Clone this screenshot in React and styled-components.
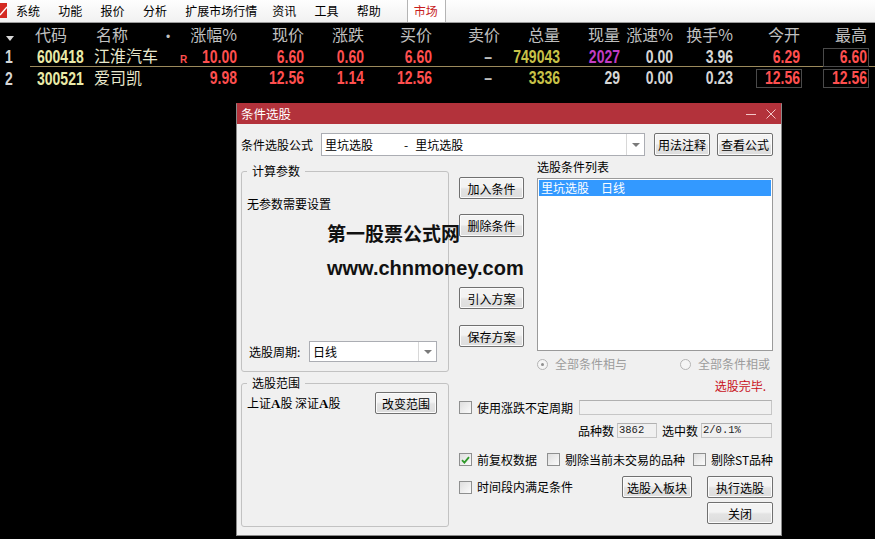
import React from 'react'
import styled, { createGlobalStyle, css } from 'styled-components'

const GlobalStyle = createGlobalStyle`
  html, body {
    margin: 0;
    padding: 0;
    background: #000;
  }
  body {
    font-family: "Noto Sans CJK SC", "Noto Sans", sans-serif;
  }
  * {
    box-sizing: border-box;
  }
`

const RED = '#ff4f4f'
const OLIVE = '#c8c248'
const PURPLE = '#c23cc4'
const LIGHT = '#d6d6d6'
const DASHC = '#bdbdbd'
const COLS = '30px 62px 73px 25px 51px 67px 60px 68px 68px 60px 60px 53px 60px 67px 67px'

const Screen = styled.div`
  position: relative;
  width: 875px;
  height: 539px;
  overflow: hidden;
  background: #000;
`

/* ---------- menu bar ---------- */

const MenuBar = styled.div`
  display: flex;
  align-items: stretch;
  height: 23px;
  background: linear-gradient(#fefefe, #f1f1f1);
  border-bottom: 1px solid #9c9c9c;
  font-size: 12px;
  line-height: 22px;
  color: #000;
`

const Logo = styled.svg`
  width: 7px;
  height: 15px;
  margin: 3px 9px 0 0;
`

const MenuItem = styled.div`
  min-width: 42.3px;
  padding-right: 15px;
  white-space: nowrap;
`

const MarketTab = styled.div`
  margin-left: 7.6px;
  padding: 0 7px 0 6px;
  border-left: 1px solid #b4b4b4;
  border-right: 1px solid #b4b4b4;
  background: #fff;
  color: #c81e1e;
`

/* ---------- quote table ---------- */

const HeadRow = styled.div`
  display: grid;
  grid-template-columns: ${COLS};
  height: 22px;
  font-size: 16px;
  line-height: 22px;
  color: #c0c0c0;
`

const HeadCell = styled.div`
  white-space: nowrap;
  text-align: ${p => (p.$right ? 'right' : 'left')};
  padding-left: ${p => p.$pl || 0}px;
  padding-right: ${p => (p.$right ? 4 : 0)}px;
`

const Bullet = styled.span`
  font-family: "Liberation Sans", Arial, sans-serif;
  font-size: 12px;
`

const SortArrow = styled.span`
  display: inline-block;
  margin-top: 8px;
  border-left: 4.5px solid transparent;
  border-right: 4.5px solid transparent;
  border-top: 5px solid #d8d8d8;
`

const DataRow = styled.div`
  display: grid;
  grid-template-columns: ${COLS};
  height: 22px;
  line-height: 21px;
  ${p =>
    p.$current &&
    css`
      background: linear-gradient(#9c8a5c, #9c8a5c) no-repeat 30px 21px / calc(100% - 30px) 1px;
    `}
`

/* digits of the quote board: a tall, narrow bold face */
const Digits = styled.span`
  display: inline-block;
  font-family: "Liberation Sans", Arial, sans-serif;
  font-weight: bold;
  font-size: 14px;
  line-height: 17px;
  transform: scaleY(1.25);
  color: ${p => p.$color};
`

const IndexCell = styled.div`
  padding-left: 5px;
`

const CodeCell = styled.div`
  padding-left: 7px;
`

const NameCell = styled.div`
  padding-left: 2px;
  font-size: 16px;
  color: #e8e8cc;
  white-space: nowrap;
`

const MarkCell = styled.div`
  padding: 4px 0 0 15px;
  font-family: "Liberation Sans", Arial, sans-serif;
  font-weight: bold;
  font-size: 10px;
  color: ${RED};
`

const NumCell = styled.div`
  display: flex;
  justify-content: flex-end;
  align-items: center;
  padding-right: ${p => (p.$dash ? 9 : p.$boxed ? 2 : 1)}px;
`

const Value = styled.span`
  display: flex;
  align-items: center;
  justify-content: flex-end;
  height: 19px;
  ${p =>
    p.$boxed
      ? css`
          width: 46px;
          padding-right: 1px;
          border: 1px solid #4a4a4a;
        `
      : css`
          padding: 0 2px;
          border: 1px solid transparent;
        `}
`

/* ---------- dialog ---------- */

const Dialog = styled.div`
  position: absolute;
  left: 236px;
  top: 103px;
  width: 546px;
  height: 433px;
  display: flex;
  flex-direction: column;
  background: #f0f0f0;
  border: 1px solid #8a8a8a;
  border-top-color: #b3323b;
  font-size: 12px;
  line-height: 14px;
  color: #000;
`

const TitleBar = styled.div`
  display: flex;
  align-items: center;
  height: 20px;
  padding: 0 5px 0 4px;
  background: #b3323b;
  color: #fff;
  font-size: 12.5px;
`

const TitleText = styled.span`
  flex: 1;
`

const TitleIcon = styled.svg`
  width: 10px;
  height: 10px;
  margin-left: ${p => p.$ml || 0}px;
`

const Body = styled.div`
  flex: 1;
  padding: 9px 8px 0 4px;
`

const Line = styled.div`
  display: flex;
  align-items: center;
  height: ${p => p.$h || 15}px;
  margin-top: ${p => p.$mt || 0}px;
  justify-content: ${p => p.$justify || 'flex-start'};
`

const Label = styled.span`
  flex: none;
  width: ${p => (p.$w ? `${p.$w}px` : 'auto')};
  margin-left: ${p => p.$ml || 0}px;
  white-space: nowrap;
`

const Combo = styled.div`
  display: flex;
  width: ${p => p.$w}px;
  height: ${p => p.$h}px;
  background: #fff;
  border: 1px solid #abadb3;
`

const ComboText = styled.div`
  flex: 1;
  padding-left: 3px;
  display: flex;
  align-items: center;
  white-space: nowrap;
`

const ComboArrow = styled.div`
  width: 18px;
  display: flex;
  align-items: center;
  justify-content: center;
  border-left: 1px solid #d8d8d8;

  &::after {
    content: '';
    border-left: 4px solid transparent;
    border-right: 4px solid transparent;
    border-top: 4px solid #7a7a7a;
  }
`

const Sep = styled.span`
  margin: 0 ${p => p.$mr || 0}px 0 ${p => p.$ml || 0}px;
`

const Button = styled.button`
  flex: none;
  width: ${p => p.$w}px;
  height: ${p => p.$h || 22}px;
  margin-top: ${p => p.$mt || 0}px;
  margin-left: ${p => (p.$auto ? 'auto' : `${p.$ml || 0}px`)};
  padding: 0;
  border: 1px solid #707070;
  border-radius: 2px;
  background: linear-gradient(#f3f3f3 45%, #e3e3e3 55%, #dddddd);
  box-shadow: inset 0 0 0 1px #fbfbfb;
  font-family: inherit;
  font-size: 12px;
  color: #000;
`

const Main = styled.div`
  display: flex;
  margin-top: 4px;
`

const LeftCol = styled.div`
  width: 208px;
  padding-top: 4px;
  display: flex;
  flex-direction: column;
  gap: 4px;
`

const Group = styled.fieldset`
  margin: 0;
  min-width: 0;
  height: ${p => p.$h}px;
  padding: ${p => p.$pt}px 11px 0 5px;
  border: 1px solid #c2c2c2;
  border-radius: 3px;
`

const Legend = styled.legend`
  padding: 0 5px;
  font-size: 12px;
  line-height: 14px;
`

const GroupBody = styled.div`
  height: ${p => p.$h}px;
  display: flex;
  flex-direction: column;
  justify-content: space-between;
`

const PeriodRow = styled.div`
  display: flex;
  align-items: center;
  padding-left: 2px;
`

const ScopeRow = styled.div`
  display: flex;
  align-items: center;
  justify-content: space-between;
`

const SerifA = styled.span`
  font-family: "Liberation Serif", serif;
  font-weight: bold;
  font-size: 13px;
`

const RightArea = styled.div`
  width: 314px;
  margin-left: 10px;
  display: flex;
  flex-direction: column;
`

const TopPart = styled.div`
  display: flex;
  height: 232px;
`

const ButtonCol = styled.div`
  width: 65px;
  display: flex;
  flex-direction: column;
`

const ListCol = styled.div`
  width: 236px;
  margin-left: 13px;
  display: flex;
  flex-direction: column;
`

const ListBox = styled.div`
  height: 174px;
  margin-top: 4px;
  padding: 1px;
  background: #fff;
  border: 1px solid #9a9a9a;
`

const ListItem = styled.div`
  height: 16px;
  line-height: 16px;
  padding-left: 2px;
  background: ${p => (p.$selected ? '#3399ff' : 'transparent')};
  color: ${p => (p.$selected ? '#fff' : '#000')};
`

const RadioRow = styled.div`
  display: flex;
  justify-content: space-between;
  height: 14px;
  margin-top: 6px;
  padding-right: 3px;
  color: #9c9c9c;
`

const RadioOpt = styled.label`
  display: flex;
  align-items: center;
  gap: 7px;
`

const Radio = styled.span`
  width: 11px;
  height: 11px;
  border-radius: 50%;
  border: 1px solid #b4b4b4;
  background: #f5f5f5;
  display: flex;
  align-items: center;
  justify-content: center;

  &::after {
    content: '';
    width: 3px;
    height: 3px;
    border-radius: 50%;
    background: ${p => (p.$on ? '#8f8f8f' : 'transparent')};
  }
`

const Status = styled.div`
  margin-top: 8px;
  line-height: 13px;
  text-align: right;
  padding-right: 7px;
  color: #c8101a;
`

const BottomPart = styled.div`
  margin-top: 8px;
  display: flex;
  flex-direction: column;
`

const CheckOpt = styled.label`
  display: flex;
  align-items: center;
  gap: 5px;
  margin-left: ${p => p.$ml || 0}px;
  white-space: nowrap;
`

const Box = styled.span`
  width: 13px;
  height: 13px;
  border: 1px solid #8e8f8f;
  background: linear-gradient(135deg, #dedede, #fbfbfb);
  display: flex;
  align-items: center;
  justify-content: center;
`

const Field = styled.span`
  flex: none;
  width: ${p => p.$w}px;
  height: 15px;
  margin-left: ${p => (p.$auto ? 'auto' : `${p.$ml || 0}px`)};
  margin-right: ${p => p.$mr || 0}px;
  padding-left: 1px;
  border: 1px solid #c6c6c6;
  border-top-color: #b0b0b0;
  background: #f0f0f0;
  font-family: "Liberation Mono", monospace;
  font-size: 10.5px;
  line-height: 13px;
  color: #222;
`

const Watermark = styled.div`
  position: absolute;
  left: 90px;
  top: 119px;
  display: flex;
  flex-direction: column;
  color: #111;
  pointer-events: none;
`

const MarkCn = styled.div`
  font-size: 19px;
  font-weight: bold;
  line-height: 20px;
`

const MarkUrl = styled.div`
  margin-top: 14px;
  font-family: "Liberation Sans", Arial, sans-serif;
  font-size: 20px;
  font-weight: bold;
  line-height: 22px;
`

/* ---------- data ---------- */

const menus = ['系统', '功能', '报价', '分析', '扩展市场行情', '资讯', '工具', '帮助']

const heads = ['涨幅%', '现价', '涨跌', '买价', '卖价', '总量', '现量', '涨速%', '换手%', '今开', '最高']

const rows = [
  {
    idx: '1',
    code: '600418',
    name: '江淮汽车',
    mark: 'R',
    current: true,
    cells: [
      ['10.00', RED],
      ['6.60', RED],
      ['0.60', RED],
      ['6.60', RED],
      ['–', DASHC],
      ['749043', OLIVE],
      ['2027', PURPLE],
      ['0.00', LIGHT],
      ['3.96', LIGHT],
      ['6.29', RED],
      ['6.60', RED, true],
    ],
  },
  {
    idx: '2',
    code: '300521',
    name: '爱司凯',
    mark: '',
    cells: [
      ['9.98', RED],
      ['12.56', RED],
      ['1.14', RED],
      ['12.56', RED],
      ['–', DASHC],
      ['3336', OLIVE],
      ['29', LIGHT],
      ['0.00', LIGHT],
      ['0.23', LIGHT],
      ['12.56', RED, true],
      ['12.56', RED, true],
    ],
  },
]

function Check({ checked }) {
  return (
    <Box>
      {checked && (
        <svg width="9" height="8" viewBox="0 0 9 8">
          <path d="M1 4.2 L3.4 6.6 L8 1.2" fill="none" stroke="#2f9a2a" strokeWidth="1.8" />
        </svg>
      )}
    </Box>
  )
}

export default function App() {
  return (
    <Screen>
      <GlobalStyle />
      <MenuBar>
        <Logo viewBox="0 0 7 15">
          <rect x="0" y="0" width="7" height="15" fill="#d42a22" />
          <path d="M0 12 L7 4" stroke="#fff" strokeWidth="1.4" />
        </Logo>
        {menus.map(m => (
          <MenuItem key={m}>{m}</MenuItem>
        ))}
        <MarketTab>市场</MarketTab>
      </MenuBar>

      <HeadRow>
        <HeadCell $pl={6}>
          <SortArrow />
        </HeadCell>
        <HeadCell $pl={5}>代码</HeadCell>
        <HeadCell $pl={4}>名称</HeadCell>
        <HeadCell $pl={1}>
          <Bullet>•</Bullet>
        </HeadCell>
        {heads.map(h => (
          <HeadCell key={h} $right>
            {h}
          </HeadCell>
        ))}
      </HeadRow>

      {rows.map(r => (
        <DataRow key={r.code} $current={r.current}>
          <IndexCell>
            <Digits $color={LIGHT}>{r.idx}</Digits>
          </IndexCell>
          <CodeCell>
            <Digits $color="#eaeaa8">{r.code}</Digits>
          </CodeCell>
          <NameCell>{r.name}</NameCell>
          <MarkCell>{r.mark}</MarkCell>
          {r.cells.map(([v, c, boxed], i) => (
            <NumCell key={i} $dash={v === '–'} $boxed={boxed}>
              <Value $boxed={boxed}>
                <Digits $color={c}>{v}</Digits>
              </Value>
            </NumCell>
          ))}
        </DataRow>
      ))}

      <Dialog>
        <TitleBar>
          <TitleText>条件选股</TitleText>
          <TitleIcon viewBox="0 0 10 10">
            <path d="M0 5.5 H10" stroke="#f3c6c8" strokeWidth="1" />
          </TitleIcon>
          <TitleIcon viewBox="0 0 10 10" $ml={10}>
            <path d="M0.5 0.5 L9.5 9.5 M9.5 0.5 L0.5 9.5" stroke="#f3c6c8" strokeWidth="1" />
          </TitleIcon>
        </TitleBar>

        <Body>
          <Line $h={23}>
            <Label $w={80}>条件选股公式</Label>
            <Combo $w={324} $h={23}>
              <ComboText>
                里坑选股
                <Sep $ml={31} $mr={7}>
                  -
                </Sep>
                里坑选股
              </ComboText>
              <ComboArrow />
            </Combo>
            <Button $w={56} $h={23} $ml={9}>
              用法注释
            </Button>
            <Button $w={56} $h={23} $ml={7}>
              查看公式
            </Button>
          </Line>

          <Main>
            <LeftCol>
              <Group $h={208} $pt={19}>
                <Legend>计算参数</Legend>
                <GroupBody $h={165}>
                  <div>无参数需要设置</div>
                  <PeriodRow>
                    <Label $w={60}>选股周期:</Label>
                    <Combo $w={128} $h={21}>
                      <ComboText>日线</ComboText>
                      <ComboArrow />
                    </Combo>
                  </PeriodRow>
                </GroupBody>
              </Group>
              <Group $h={151} $pt={2}>
                <Legend>选股范围</Legend>
                <ScopeRow>
                  <span>
                    上证<SerifA>A</SerifA>股 深证<SerifA>A</SerifA>股
                  </span>
                  <Button $w={62} $h={22}>
                    改变范围
                  </Button>
                </ScopeRow>
              </Group>
            </LeftCol>

            <RightArea>
              <TopPart>
                <ButtonCol>
                  <Button $w={65} $h={22} $mt={17}>
                    加入条件
                  </Button>
                  <Button $w={65} $h={23} $mt={15}>
                    删除条件
                  </Button>
                  <Button $w={65} $h={22} $mt={50}>
                    引入方案
                  </Button>
                  <Button $w={65} $h={22} $mt={16}>
                    保存方案
                  </Button>
                </ButtonCol>
                <ListCol>
                  <Label>选股条件列表</Label>
                  <ListBox>
                    <ListItem $selected>
                      里坑选股<Sep $ml={12}>日线</Sep>
                    </ListItem>
                  </ListBox>
                  <RadioRow>
                    <RadioOpt>
                      <Radio $on />
                      全部条件相与
                    </RadioOpt>
                    <RadioOpt>
                      <Radio />
                      全部条件相或
                    </RadioOpt>
                  </RadioRow>
                  <Status>选股完毕.</Status>
                </ListCol>
              </TopPart>

              <BottomPart>
                <Line>
                  <CheckOpt>
                    <Check />
                    使用涨跌不定周期
                  </CheckOpt>
                  <Field $w={193} $auto $mr={1} />
                </Line>
                <Line $mt={8} $justify="flex-end">
                  <Label>品种数</Label>
                  <Field $w={40} $ml={3}>
                    3862
                  </Field>
                  <Label $ml={5}>选中数</Label>
                  <Field $w={71} $ml={3} $mr={1}>
                    2/0.1%
                  </Field>
                </Line>
                <Line $mt={14}>
                  <CheckOpt>
                    <Check checked />
                    前复权数据
                  </CheckOpt>
                  <CheckOpt $ml={10}>
                    <Check />
                    剔除当前未交易的品种
                  </CheckOpt>
                  <CheckOpt $ml={8}>
                    <Check />
                    剔除ST品种
                  </CheckOpt>
                </Line>
                <Line $mt={9} $h={22}>
                  <CheckOpt>
                    <Check />
                    时间段内满足条件
                  </CheckOpt>
                  <Button $w={70} $auto>
                    选股入板块
                  </Button>
                  <Button $w={66} $ml={15}>
                    执行选股
                  </Button>
                </Line>
                <Line $mt={4} $h={22} $justify="flex-end">
                  <Button $w={66}>关闭</Button>
                </Line>
              </BottomPart>
            </RightArea>
          </Main>
        </Body>

        <Watermark>
          <MarkCn>第一股票公式网</MarkCn>
          <MarkUrl>www.chnmoney.com</MarkUrl>
        </Watermark>
      </Dialog>
    </Screen>
  )
}
